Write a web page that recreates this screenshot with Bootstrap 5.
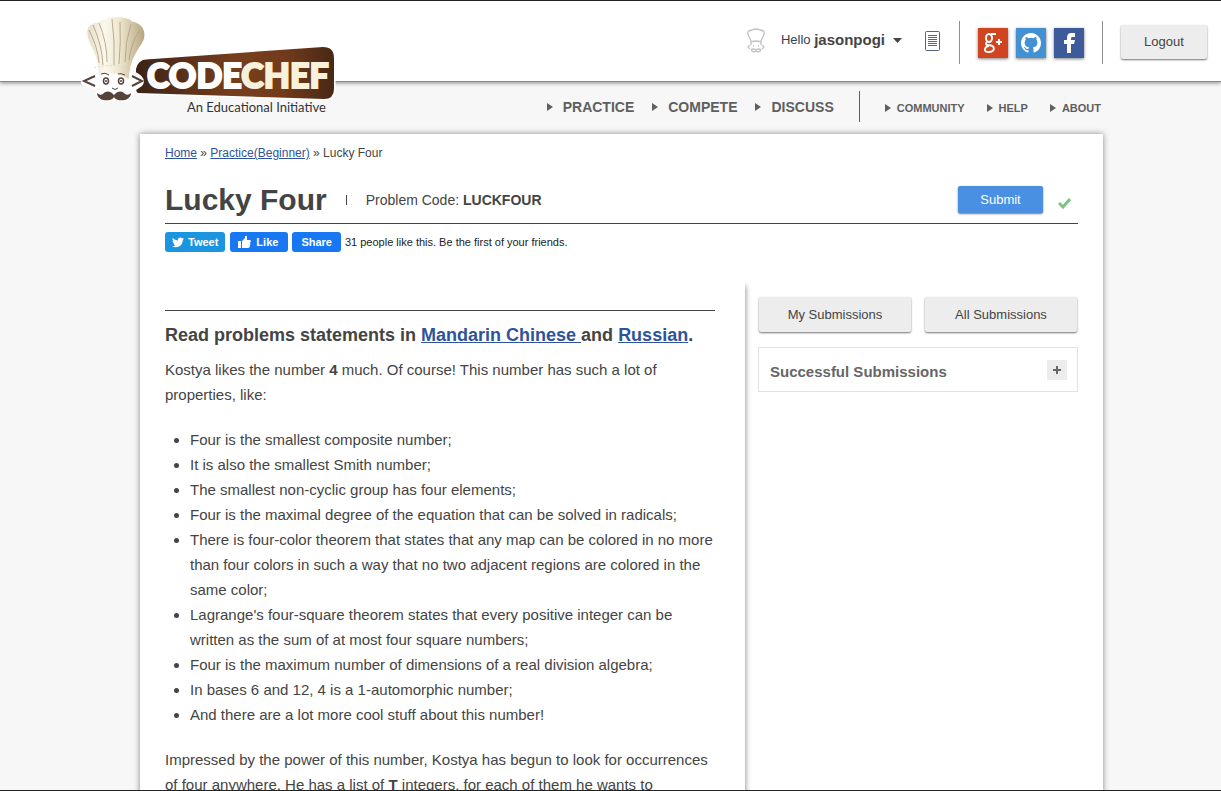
<!DOCTYPE html>
<html lang="en">
<head>
<meta charset="utf-8">
<meta name="viewport" content="width=device-width, initial-scale=1">
<title>Lucky Four | CodeChef</title>
<link href="https://cdn.jsdelivr.net/npm/bootstrap@5.3.0/dist/css/bootstrap.min.css" rel="stylesheet">
<style>
  html { scrollbar-width: none; }
  body { font-family: "Liberation Sans", Arial, sans-serif; font-size: 15px; line-height: 25px; color: #444; background: #f7f7f7; }
  body::after { content: ""; position: fixed; left: 0; right: 0; bottom: 0; height: 1px; background: #222; }
  a { color: #2f5399; }
  a:hover { color: #4a90e2; }
  .top-bar { height: 82px; border-top: 1px solid #222; border-bottom: 1px solid #8a8d8b; box-shadow: 0 1px 4px rgba(0,0,0,.45); padding: 20px 14px 16px 80px; }
  .logo { position: absolute; left: 80px; top: 11px; z-index: 2; }
  .logo-name { font: 900 34px Lato, sans-serif; }
  .logo-tag { font: 13px Lato, sans-serif; }
  .rule-v { width: 1px; background: #8e9192; height: 43px; margin: 0 18px; }
  .user-menu { font-size: 13px; line-height: 20px; color: #2f4257; text-decoration: none; margin: 9px 23px 0 15px; }
  .user-menu strong { font-size: 15px; color: #444; }
  .icon-top { margin-top: 7px; }
  .social { width: 30px; height: 30px; box-shadow: 0 1px 3px rgba(0,0,0,.5); }
  .social-google { background: #d0451f; }
  .social-github { background: #4391d2; }
  .social-facebook { background: #3d5a9b; }
  .btn-flat { --bs-btn-bg: #ededed; --bs-btn-color: #444; --bs-btn-hover-bg: #e2e2e2; --bs-btn-border-width: 0; --bs-btn-border-radius: 2px; --bs-btn-padding-y: 0; font-size: 13px; line-height: 35px; box-shadow: 0 1px 2px rgba(0,0,0,.55); }
  .btn-logout { width: 86px; padding: 0; line-height: 34px; }
  .btn-send { --bs-btn-bg: #4a90e2; --bs-btn-color: #fff; --bs-btn-hover-bg: #3a80d2; --bs-btn-hover-color: #fff; width: 85px; line-height: 27px; }
  .main-nav { height: 52px; padding: 9px 120px 0 0; }
  .main-nav a { color: #5f5f5f; font-weight: bold; font-size: 14px; line-height: 32px; text-decoration: none; }
  .main-nav .minor { font-size: 11px; line-height: 34px; }
  .main-nav a::before { content: ""; display: inline-block; border: solid transparent; border-width: 4px 0 4px 6px; border-left-color: #5f5f5f; margin-right: 10px; vertical-align: 1px; }
  .main-nav .minor::before { margin-right: 6px; vertical-align: 0; }
  .main-nav .rule-v { height: 31px; background: #5f5f5f; margin: 0 25px; }
  .nav-major { gap: 18px; }
  .nav-minor { gap: 22px; }
  .sheet { margin: 0 118px 0 140px; padding: 9px 25px 0; background: #fff; box-shadow: 0 0 6px rgba(0,0,0,.45); }
  .crumbs { font-size: 12px; line-height: 20px; }
  .title-row { border-bottom: 1px solid #444; height: 61px; padding-top: 13px; }
  .title-row h1 { font-size: 30px; line-height: 40px; font-weight: bold; }
  .tick { width: 1px; height: 10px; background: #444; margin: 0 19px; }
  .code { font-size: 14px; line-height: 20px; }
  .solved { margin: 6px 7px 0 15px; }
  .share-row { font-size: 11px; line-height: 20px; gap: 4px; color: #222; }
  .share-row button { border: 0; border-radius: 3px; height: 20px; padding: 0 9px; background: #1877f2; color: #fff; font-weight: bold; }
  .share-row .tweet { background: #1b95e0; padding: 0 7px; margin-right: 1px; }
  .share-row .thumb { padding: 0 10px 0 8px; }
  .statement { padding: 34px 30px 0 0; box-shadow: 4px 7px 5px -3px rgba(0,0,0,.4); min-height: 540px; }
  .statement-body { border-top: 1px solid #444; padding-top: 12px; }
  .statement h2 { font-size: 18px; line-height: 25px; font-weight: bold; margin-bottom: 9px; }
  .statement p, .statement ul { margin-bottom: 20px; }
  .statement ul { padding-left: 25px; }
  .side { width: 333px; padding: 21px 0 0 13px; }
  .side-buttons { gap: 14px; padding: 0 1px; margin-bottom: 15px; }
  .panel { border: 1px solid #e2e2e2; height: 45px; padding: 0 10px 0 11px; color: #666; }
  .panel h3 { font: bold 15px "Liberation Sans", Arial, sans-serif; padding-top: 3px; }
  .plus { width: 20px; height: 20px; border: 0; padding: 0; background: #ececec; }
</style>
</head>
<body>
<header class="top-bar bg-white d-flex justify-content-end align-items-start position-relative">
  <a href="#" class="logo" aria-label="CodeChef home">
    <svg class="d-block" width="258" height="106" viewBox="80 12 258 106">
      <defs>
        <linearGradient id="wood"><stop offset="0" stop-color="#3c2317"/><stop offset=".5" stop-color="#773e1c"/><stop offset=".75" stop-color="#713b1b"/><stop offset="1" stop-color="#482815"/></linearGradient>
        <linearGradient id="hat"><stop offset="0" stop-color="#e4dcc5"/><stop offset=".3" stop-color="#fbf8ec"/><stop offset=".55" stop-color="#efe8d1"/><stop offset="1" stop-color="#b6a47f"/></linearGradient>
      </defs>
      <path d="M146 59.500 323 47Q334 47 334 58V89Q334 99 324 99L138 93Q136 92 136 88V69Q138 60 146 59.500Z" fill="url(#wood)" stroke="#fff" stroke-width="3" paint-order="stroke"/>
      <path d="M92 73C82 76 79 79 82 85L96 90Q93 102 107 102Q112 102 115 99Q119 102 124 102Q137 100 133 92L142 86Q147 80 139 74L130 69H98Z" fill="#fff"/>
      <path d="M88 39C84 27 91 22 99 22C105 15 127 15 132 21C143 23 148 33 143 42C138 51 130 59 129 81Q114 70 98 76C100 60 91 49 88 39Z" fill="url(#hat)" stroke="#fff"/>
      <path d="M89 30Q98 48 99 63M93 25Q102 45 103 65M99 23Q107 42 107 62M112 19Q115 40 114 65M120 22Q121 42 119 64M131 24Q125 42 125 62M140 30Q131 43 129 60" fill="none" stroke="#b3a284" stroke-width=".9"/>
      <path d="M94 68Q114 62 132 70" fill="none" stroke="#d9cfb0" stroke-width=".7" stroke-dasharray="2 2"/>
      <path d="M98 76Q114 69 130 80V90H98Z" fill="#fff"/>
      <path d="M95 76 84 81 95 86M132 76 142 81 132 86" fill="none" stroke="#554239" stroke-width="2"/>
      <g fill="none" stroke="#554239" stroke-width="1.500"><path d="M101 74Q105 72 109 75M118 74Q121 73 125 75M112 88Q115 91 118 88" stroke-width="1"/><ellipse cx="106" cy="81" rx="2.500" ry="3"/><ellipse cx="121" cy="81" rx="2.500" ry="3"/></g>
      <circle cx="106" cy="81" r="1" fill="#554239"/><circle cx="121" cy="81" r="1" fill="#554239"/>
      <path d="M114 95C110 90 105 91 103 94Q100 96 97 93C97 102 112 102 114 97C116 102 131 102 131 93Q128 96 125 94C123 91 118 90 114 95Z" fill="#554239"/>
      <text class="logo-name" x="147" y="88" fill="#fff" stroke="#fff" stroke-width="2">CODE<tspan fill="#f8f1dc" stroke="#f8f1dc">CHEF</tspan></text>
      <text class="logo-tag" x="187" y="112" fill="#333">An Educational Initiative</text>
    </svg>
  </a>
  <svg class="icon-top" width="20" height="26" viewBox="0 0 20 26" fill="none" stroke="#c2c2c2" stroke-width="1.300" aria-hidden="true"><path d="M5 14C5 10 1 8 2 4Q3 2 6 2Q10 0 14 2Q17 2 18 4C19 8 15 10 15 14Q10 12 5 14ZM5 14V17M15 14V17M4 17 2 19 4 21M16 17 18 19 16 21M7 18H8M12 18H13M5 22Q7 20 10 22Q13 20 15 22Q13 25 10 23Q7 25 5 22"/></svg>
  <a href="#" class="user-menu d-flex align-items-center">Hello&nbsp;<strong>jasonpogi</strong>
    <svg class="ms-2" width="9" height="5"><path d="M0 0H9L4.500 5Z" fill="#444"/></svg></a>
  <svg class="icon-top" width="16" height="24" viewBox="0 0 16 24" fill="none" stroke="#526586"><rect x=".5" y="3.500" width="14" height="19" rx="1"/><path d="M3 7.500H12M3 9.500H12M3 11.500H12M3 13.500H12M3 15.500H12M3 17.500H12"/></svg>
  <div class="rule-v"></div>
  <div class="icon-top d-flex gap-2">
    <a href="#" class="social social-google" aria-label="Google Plus"><svg class="d-block" width="30" height="30" fill="none" stroke="#fff" stroke-width="2"><ellipse cx="11" cy="10" rx="3" ry="4"/><path d="M13 6H18M9 14Q7 16 9 17Q16 17 16 21Q15 24 11 24Q6 24 7 21Q8 18 11 18" stroke-width="1.800"/><path d="M18 14H24M21 11V17"/></svg></a>
    <a href="#" class="social social-github" aria-label="GitHub"><svg class="d-block" width="30" height="30" viewBox="-4 -4 24 24" fill="#fff"><path d="M8 0C3.580 0 0 3.580 0 8c0 3.540 2.290 6.530 5.470 7.590.4.070.55-.17.55-.38 0-.19-.01-.82-.01-1.490-2.010.37-2.530-.49-2.690-.94-.09-.23-.48-.94-.82-1.130-.28-.15-.68-.52-.01-.53.63-.01 1.080.58 1.230.82.72 1.210 1.870.87 2.330.66.070-.52.28-.87.51-1.070-1.780-.2-3.640-.89-3.640-3.950 0-.87.31-1.590.82-2.150-.08-.2-.36-1.020.08-2.120 0 0 .67-.21 2.200.82a7.600 7.600 0 0 1 4 0c1.530-1.040 2.200-.82 2.200-.82.44 1.100.16 1.920.08 2.120.51.560.82 1.270.82 2.150 0 3.070-1.870 3.750-3.650 3.950.29.250.54.730.54 1.480 0 1.070-.01 1.930-.01 2.200 0 .21.150.46.550.38A8 8 0 0 0 16 8c0-4.420-3.580-8-8-8Z"/></svg></a>
    <a href="#" class="social social-facebook" aria-label="Facebook"><svg class="d-block" width="30" height="30"><path d="M13 25V16H10V12H13V10Q13 5 17 5H21V9H18Q17 9 17 11V12H21L20 16H17V25Z" fill="#fff"/></svg></a>
  </div>
  <div class="rule-v"></div>
  <button type="button" class="btn btn-flat btn-logout mt-1">Logout</button>
</header>

<nav class="main-nav d-flex justify-content-end" aria-label="Main">
  <div class="nav-major d-flex"><a href="#">PRACTICE</a><a href="#">COMPETE</a><a href="#">DISCUSS</a></div>
  <div class="rule-v"></div>
  <div class="nav-minor d-flex"><a href="#" class="minor">COMMUNITY</a><a href="#" class="minor">HELP</a><a href="#" class="minor">ABOUT</a></div>
</nav>

<main class="sheet">
  <div class="crumbs"><a href="#">Home</a> » <a href="#">Practice(Beginner)</a> » Lucky Four</div>
  <div class="title-row d-flex align-items-center">
    <h1 class="mb-0">Lucky Four</h1>
    <span class="tick"></span>
    <div class="code">Problem Code: <strong>LUCKFOUR</strong></div>
    <button type="button" class="btn btn-flat btn-send ms-auto">Submit</button>
    <svg class="solved" width="13" height="12" viewBox="0 0 13 12" role="img" aria-label="Solved"><path d="M1 6 5 10 12 2" fill="none" stroke="#81c182" stroke-width="3"/></svg>
  </div>
  <div class="share-row d-flex align-items-center mt-2">
    <button type="button" class="tweet d-flex align-items-center gap-1"><svg width="12" height="12" viewBox="0 0 16 16" fill="#fff"><path d="M5.026 15c6.038 0 9.341-5.003 9.341-9.334q.002-.211-.006-.422A6.700 6.700 0 0 0 16 3.542a6.700 6.700 0 0 1-1.889.518 3.300 3.300 0 0 0 1.447-1.817 6.500 6.500 0 0 1-2.087.793A3.286 3.286 0 0 0 7.875 6.030a9.320 9.320 0 0 1-6.767-3.429 3.290 3.290 0 0 0 1.018 4.382A3.300 3.300 0 0 1 .64 6.575v.045a3.290 3.290 0 0 0 2.632 3.218 3.200 3.200 0 0 1-.865.115 3 3 0 0 1-.614-.057 3.280 3.280 0 0 0 3.067 2.277A6.600 6.600 0 0 1 .78 13.580a6 6 0 0 1-.78-.045A9.340 9.340 0 0 0 5.026 15"/></svg>Tweet</button>
    <button type="button" class="thumb d-flex align-items-center gap-1"><svg width="14" height="14" viewBox="0 0 14 14" fill="#fff"><path d="M0 6H3V13H0ZM4 6 7 3V1Q9 0 9 2V5H12Q14 6 12 7.500Q13 9 12 10Q12 13 10 13H4Z"/></svg>Like</button>
    <button type="button">Share</button>
    <span>31 people like this. Be the first of your friends.</span>
  </div>
  <div class="d-flex mt-4">
    <article class="statement flex-fill">
      <div class="statement-body">
        <h2>Read problems statements in <a href="#">Mandarin Chinese </a>and <a href="#">Russian</a>.</h2>
        <p>Kostya likes the number <strong>4</strong> much. Of course! This number has such a lot of properties, like:</p>
        <ul>
          <li>Four is the smallest composite number;</li>
          <li>It is also the smallest Smith number;</li>
          <li>The smallest non-cyclic group has four elements;</li>
          <li>Four is the maximal degree of the equation that can be solved in radicals;</li>
          <li>There is four-color theorem that states that any map can be colored in no more than four colors in such a way that no two adjacent regions are colored in the same color;</li>
          <li>Lagrange's four-square theorem states that every positive integer can be written as the sum of at most four square numbers;</li>
          <li>Four is the maximum number of dimensions of a real division algebra;</li>
          <li>In bases 6 and 12, 4 is a 1-automorphic number;</li>
          <li>And there are a lot more cool stuff about this number!</li>
        </ul>
        <p>Impressed by the power of this number, Kostya has begun to look for occurrences of four anywhere. He has a list of <strong>T</strong> integers, for each of them he wants to</p>
      </div>
    </article>
    <aside class="side flex-shrink-0">
      <div class="side-buttons d-flex"><button type="button" class="btn btn-flat w-50">My Submissions</button><button type="button" class="btn btn-flat w-50">All Submissions</button></div>
      <div class="panel d-flex align-items-center justify-content-between"><h3 class="mb-0">Successful Submissions</h3><button type="button" class="plus" aria-label="Expand"><svg class="d-block m-auto" width="10" height="10"><path d="M1 5H9M5 1V9" stroke="#666" stroke-width="2"/></svg></button></div>
    </aside>
  </div>
</main>
<script src="https://cdn.jsdelivr.net/npm/bootstrap@5.3.0/dist/js/bootstrap.bundle.min.js"></script>
</body>
</html>
